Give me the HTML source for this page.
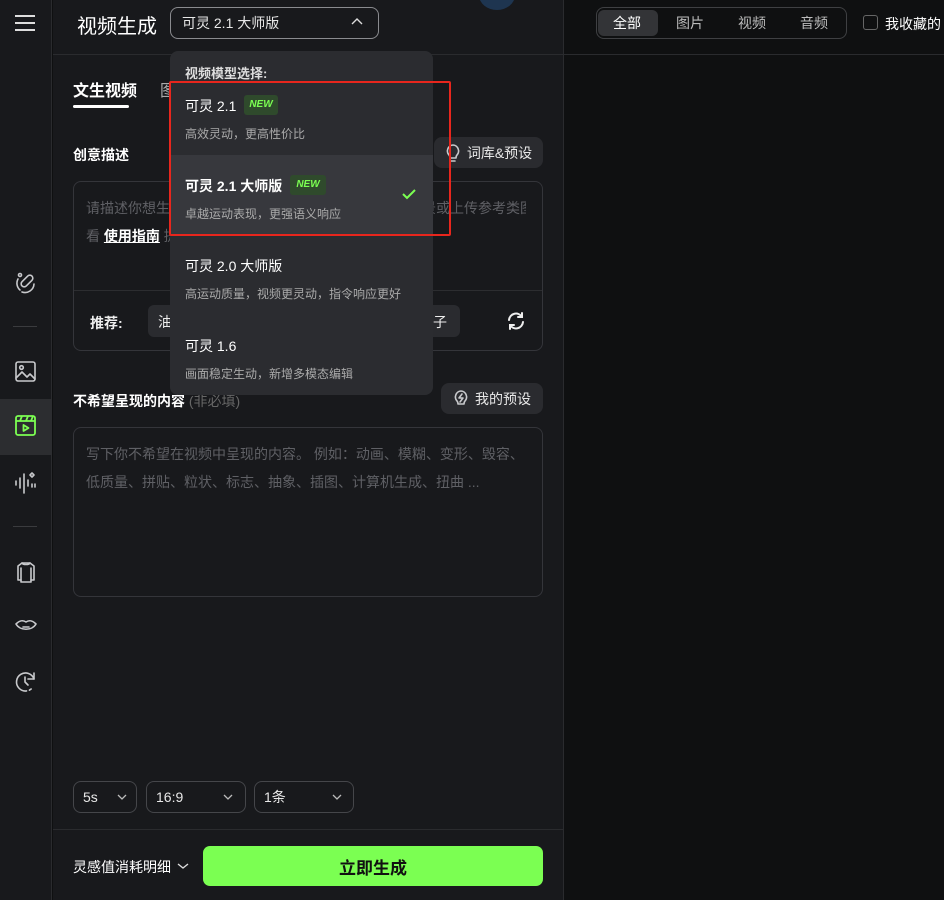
<!DOCTYPE html>
<html><head><meta charset="utf-8"><style>
*{box-sizing:border-box;margin:0;padding:0}
body{width:944px;height:900px;overflow:hidden;background:#0f1011;font-family:"Liberation Sans","Noto Sans CJK SC",sans-serif;color:#fff;position:relative}
.a{position:absolute}
.sb{left:0;top:0;width:52px;height:900px;background:#18191c;border-right:1px solid #2a2b2e}
.mp{left:53px;top:0;width:511px;height:900px;background:#18191c;border-right:1px solid #2a2b2e}
.ic{stroke:#c8c9cc;fill:none;stroke-width:1.6;stroke-linecap:round;stroke-linejoin:round}
.btn{background:#2a2b2f;border-radius:8px;font-size:14px;color:#e8e8e8;display:flex;align-items:center;justify-content:center;gap:6px}
.sel{border:1px solid #45464a;border-radius:8px;font-size:14px;color:#e8e8e8;display:flex;align-items:center;padding-left:9px}
.ph{color:#5f6065;font-size:14px;line-height:28px;white-space:nowrap;overflow:hidden}
</style></head><body>
<div class="a sb"></div>
<div class="a mp"></div>
<div class="a" style="left:15px;top:15px;width:20px;height:2px;background:#ddd"></div>
<div class="a" style="left:15px;top:22px;width:20px;height:2px;background:#ddd"></div>
<div class="a" style="left:15px;top:29px;width:20px;height:2px;background:#ddd"></div>
<svg class="a" style="left:13px;top:270px" width="26" height="26" viewBox="0 0 26 26"><g class="ic"><path d="M5 9a9 9 0 0 0 2 11"/><path d="M9 22a9 9 0 0 0 12-8"/><rect x="11" y="4" width="6" height="14" rx="3" transform="rotate(45 14 11)"/><circle cx="7" cy="5" r="1.5"/></g></svg>
<div class="a" style="left:13px;top:326px;width:24px;height:1px;background:#3a3b3e"></div>
<svg class="a" style="left:14px;top:360px" width="24" height="24" viewBox="0 0 24 24"><g class="ic"><rect x="2" y="2" width="19" height="19" rx="2"/><circle cx="7.5" cy="7.5" r="1.8"/><path d="M2 18l6-6 5 5 3-3 5 5"/></g></svg>
<div class="a" style="left:0;top:399px;width:52px;height:56px;background:#2c2d30"></div>
<svg class="a" style="left:14px;top:414px" width="24" height="24" viewBox="0 0 24 24"><g fill="none" stroke="#7cff52" stroke-width="1.8" stroke-linejoin="round"><rect x="2" y="2" width="19" height="19" rx="2"/><path d="M2 7h19M8 2l-2 5M14 2l-2 5M19 2l-2 5"/><path d="M9.5 11v6l5-3z"/></g></svg>
<svg class="a" style="left:14px;top:470px" width="24" height="26" viewBox="0 0 24 26"><g class="ic"><path d="M2 11v4M6 8v10M10 4v19M14 10v6M18 14v3M21 14v3"/><path d="M18 3l2 2-2 2-2-2z"/></g></svg>
<div class="a" style="left:13px;top:526px;width:24px;height:1px;background:#3a3b3e"></div>
<svg class="a" style="left:14px;top:560px" width="24" height="24" viewBox="0 0 24 24"><g class="ic"><path d="M8 3h8l4 3v14h-3v2H7v-2H4V6z"/><path d="M8 3c1 2 7 2 8 0"/><path d="M7 8v12M17 8v12"/></g></svg>
<svg class="a" style="left:14px;top:616px" width="24" height="20" viewBox="0 0 24 20"><g class="ic"><path d="M2 8c4-4 7-4 10-2 3-2 6-2 10 2-4 7-16 7-20 0z"/><path d="M9 11h6"/></g></svg>
<svg class="a" style="left:14px;top:670px" width="24" height="24" viewBox="0 0 24 24"><g class="ic"><path d="M20 9A9 9 0 1 0 19 17" stroke-dasharray="40 3 2 3"/><path d="M20 3v6h-6"/><path d="M11 7v5l3 3"/></g></svg>
<div class="a" style="left:53px;top:54px;width:891px;height:1px;background:#2a2b2e"></div>
<div class="a" style="left:77px;top:10px;font-size:20px;color:#fff">视频生成</div>
<div class="a sel" style="left:170px;top:7px;width:209px;height:32px;border-color:#8a8b8f;padding-left:11px;font-size:14px">可灵 2.1 大师版</div>
<svg class="a" style="left:351px;top:17px" width="12" height="10" viewBox="0 0 12 10"><path d="M1 7l5-5 5 5" fill="none" stroke="#ddd" stroke-width="1.4"/></svg>
<div class="a" style="left:479px;top:-20px;width:36px;height:30px;border-radius:50%;background:#1e3550"></div>
<div class="a" style="left:596px;top:7px;width:251px;height:32px;border:1px solid #3f4043;border-radius:8px"></div>
<div class="a" style="left:598px;top:10px;width:60px;height:26px;background:#333437;border-radius:6px"></div>
<div class="a" style="left:613px;top:13px;font-size:14px;color:#fff">全部</div>
<div class="a" style="left:676px;top:13px;font-size:14px;color:#bbb">图片</div>
<div class="a" style="left:738px;top:13px;font-size:14px;color:#bbb">视频</div>
<div class="a" style="left:800px;top:13px;font-size:14px;color:#bbb">音频</div>
<div class="a" style="left:863px;top:15px;width:15px;height:15px;border:1px solid #666;border-radius:3px"></div>
<div class="a" style="left:885px;top:14px;font-size:14px;color:#fff;white-space:nowrap">我收藏的</div>
<div class="a" style="left:73px;top:77px;font-size:16px;font-weight:bold">文生视频</div>
<div class="a" style="left:73px;top:105px;width:56px;height:3px;background:#fff;border-radius:2px"></div>
<div class="a" style="left:160px;top:77px;font-size:16px;color:#aaa">图</div>
<div class="a" style="left:73px;top:145px;font-size:14px;font-weight:bold">创意描述</div>
<div class="a btn" style="left:434px;top:137px;width:109px;height:31px"><svg width="16" height="18" viewBox="0 0 16 18"><g class="ic"><path d="M8 1a6 6 0 0 0-4 10c1 1 1 2 1 3h6c0-1 0-2 1-3A6 6 0 0 0 8 1z"/><path d="M6 17h4"/></g></svg>词库&amp;预设</div>
<div class="a" style="left:73px;top:181px;width:470px;height:170px;border:1px solid #34353a;border-radius:8px"></div>
<div class="a ph" style="left:86px;top:194px;width:440px">请描述你想生成的视频内容，可以描述主体、动作、场景或上传参考类图片，也可查</div>
<div class="a ph" style="left:86px;top:222px;width:440px">看 <u style="color:#fff;font-weight:bold">使用指南</u> 提</div>
<div class="a" style="left:74px;top:290px;width:468px;height:1px;background:#2c2d30"></div>
<div class="a" style="left:90px;top:313px;font-size:14px;font-weight:bold;color:#eee">推荐:</div>
<div class="a" style="left:148px;top:305px;width:312px;height:32px;background:#2a2b2f;border-radius:6px"></div>
<div class="a" style="left:158px;top:312px;font-size:14px;color:#eee">油</div>
<div class="a" style="left:433px;top:312px;font-size:14px;color:#eee">子</div>
<svg class="a" style="left:506px;top:311px" width="20" height="20" viewBox="0 0 20 20"><g fill="none" stroke="#eee" stroke-width="2" stroke-linecap="round"><path d="M3 9a7 7 0 0 1 13-3"/><path d="M17 11a7 7 0 0 1-13 3"/><path d="M16 2v4h-4M4 18v-4h4"/></g></svg>
<div class="a" style="left:73px;top:391px;font-size:14px;font-weight:bold">不希望呈现的内容 <span style="color:#666;font-weight:normal">(非必填)</span></div>
<div class="a btn" style="left:441px;top:383px;width:102px;height:31px"><svg width="16" height="18" viewBox="0 0 16 18"><g class="ic"><path d="M8 1a6 6 0 0 0-4 10c1 1 1 2 1 3h6c0-1 0-2 1-3A6 6 0 0 0 8 1z"/><path d="M9 4l-3 4h4l-3 4"/></g></svg>我的预设</div>
<div class="a" style="left:73px;top:427px;width:470px;height:170px;border:1px solid #34353a;border-radius:8px"></div>
<div class="a ph" style="left:86px;top:440px;width:450px">写下你不希望在视频中呈现的内容。 例如：动画、模糊、变形、毁容、</div>
<div class="a ph" style="left:86px;top:468px;width:450px">低质量、拼贴、粒状、标志、抽象、插图、计算机生成、扭曲 ...</div>
<div class="a sel" style="left:73px;top:781px;width:64px;height:32px">5s</div>
<div class="a sel" style="left:146px;top:781px;width:100px;height:32px">16:9</div>
<div class="a sel" style="left:254px;top:781px;width:100px;height:32px">1条</div>
<svg class="a" style="left:117px;top:793px" width="10" height="8"><path d="M1 2l4 4 4-4" fill="none" stroke="#bbb" stroke-width="1.3"/></svg>
<svg class="a" style="left:223px;top:793px" width="10" height="8"><path d="M1 2l4 4 4-4" fill="none" stroke="#bbb" stroke-width="1.3"/></svg>
<svg class="a" style="left:332px;top:793px" width="10" height="8"><path d="M1 2l4 4 4-4" fill="none" stroke="#bbb" stroke-width="1.3"/></svg>
<div class="a" style="left:53px;top:829px;width:510px;height:1px;background:#2a2b2e"></div>
<div class="a" style="left:73px;top:857px;font-size:14px;color:#fff">灵感值消耗明细</div>
<svg class="a" style="left:177px;top:862px" width="12" height="8"><path d="M1 2l5 4 5-4" fill="none" stroke="#ddd" stroke-width="1.4"/></svg>
<div class="a" style="left:203px;top:846px;width:340px;height:40px;background:#7bff52;border-radius:7px;color:#111;font-size:17px;font-weight:bold;display:flex;align-items:center;justify-content:center">立即生成</div>
<div class="a" style="left:170px;top:51px;width:263px;height:344px;background:#2b2c30;border-radius:8px;overflow:hidden">
 <div class="a" style="left:15px;top:12px;font-size:13px;font-weight:bold;color:#ddd">视频模型选择:</div>
 <div class="a" style="left:15px;top:45px;font-size:14px;color:#fff">可灵 2.1</div>
 <div class="a" style="left:74px;top:44px;width:34px;height:20px;background:#2f4a2c;border-radius:3px;font-size:10px;font-weight:bold;font-style:italic;color:#7bff52;text-align:center;line-height:20px">NEW</div>
 <div class="a" style="left:15px;top:74px;font-size:12px;color:#aaa">高效灵动，更高性价比</div>
 <div class="a" style="left:0;top:104px;width:263px;height:80px;background:#37383d"></div>
 <div class="a" style="left:15px;top:125px;font-size:14px;color:#fff;font-weight:bold">可灵 2.1 大师版</div>
 <div class="a" style="left:120px;top:124px;width:36px;height:20px;background:#2f4a2c;border-radius:3px;font-size:10px;font-weight:bold;font-style:italic;color:#7bff52;text-align:center;line-height:20px">NEW</div>
 <svg class="a" style="left:232px;top:137px" width="14" height="12"><path d="M1 6l4 4 8-8" fill="none" stroke="#7bff52" stroke-width="2"/></svg>
 <div class="a" style="left:15px;top:154px;font-size:12px;color:#aaa">卓越运动表现，更强语义响应</div>
 <div class="a" style="left:15px;top:205px;font-size:14px;color:#fff">可灵 2.0 大师版</div>
 <div class="a" style="left:15px;top:234px;font-size:12px;color:#aaa">高运动质量，视频更灵动，指令响应更好</div>
 <div class="a" style="left:15px;top:285px;font-size:14px;color:#fff">可灵 1.6</div>
 <div class="a" style="left:15px;top:314px;font-size:12px;color:#aaa">画面稳定生动，新增多模态编辑</div>
</div>
<div class="a" style="left:169px;top:81px;width:282px;height:155px;border:2px solid #e8261d;border-radius:2px"></div>
</body></html>
